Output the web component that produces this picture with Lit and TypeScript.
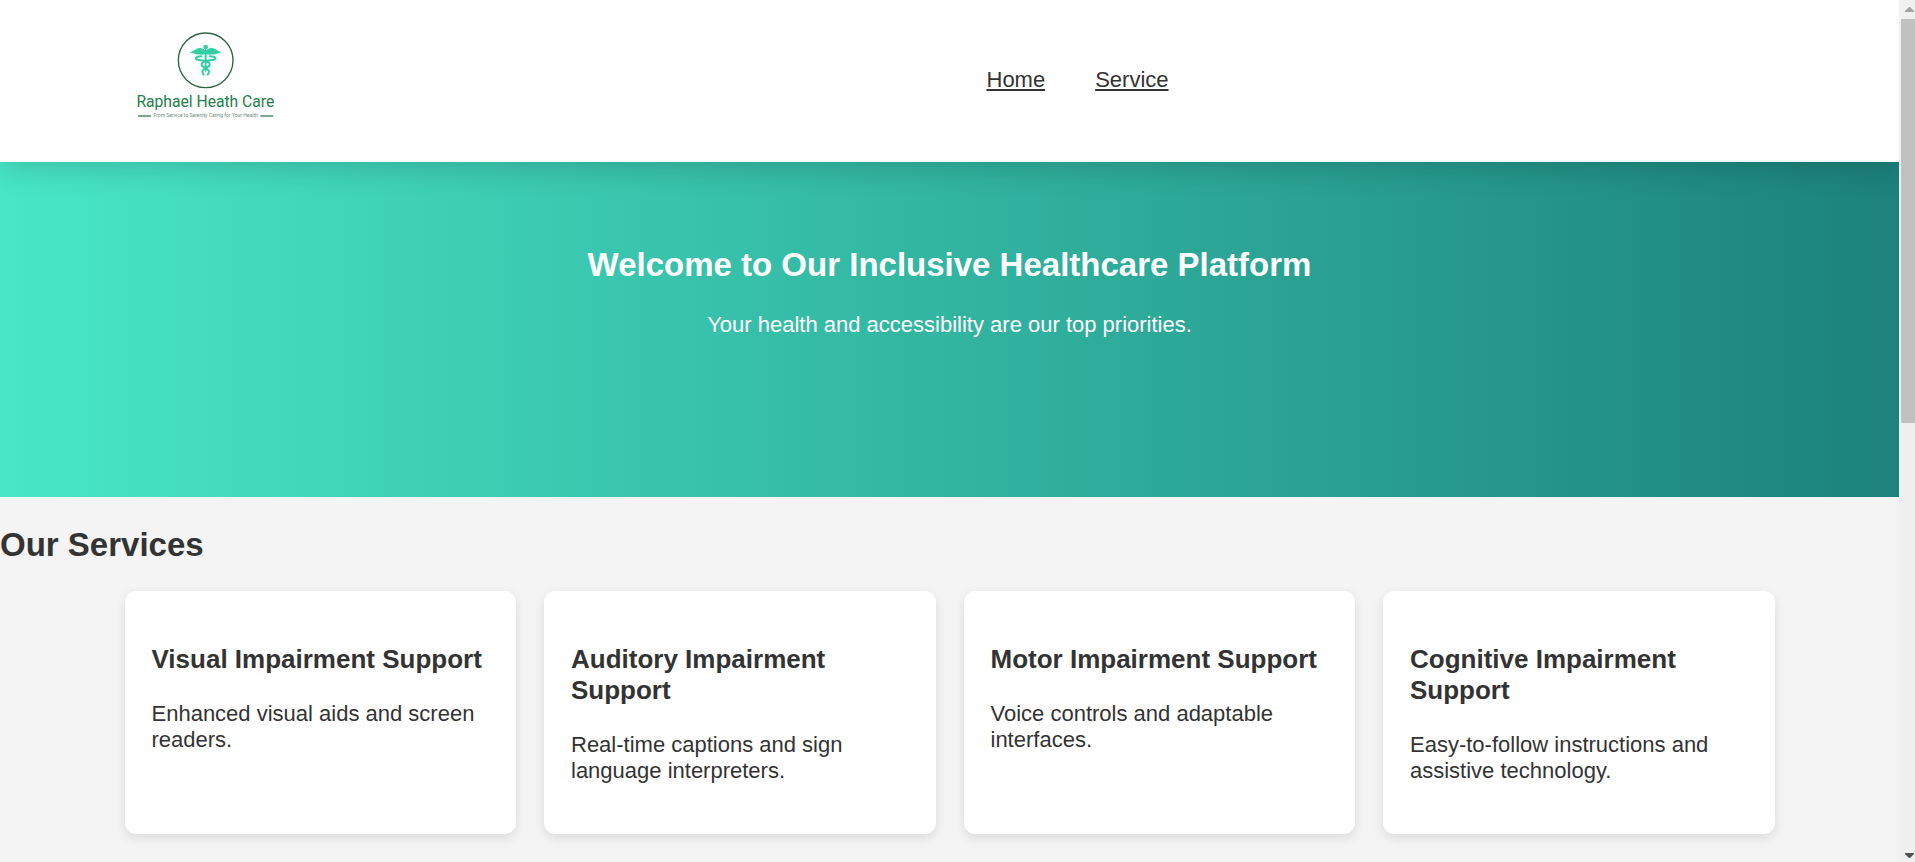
import { LitElement, html, css } from "lit";
import { customElement, property } from "lit/decorators.js";

@customElement("brand-logo")
class BrandLogo extends LitElement {
  static styles = css`
    :host { display: block; }
    .logo { display: block; width: 166px; height: 122px; }
    .name { font-family: Roboto, sans-serif; font-size: 47px; fill: #23804a; }
    .tagline { font-family: Roboto, sans-serif; font-size: 15px; fill: #6f8c7c; }
    .ring { fill: none; stroke: #2c6446; stroke-width: 4; }
    .rule { stroke: #4d8a68; stroke-width: 5; }
    .solid { fill: #32cfa5; }
    .line { fill: none; stroke: #32cfa5; stroke-width: 6; stroke-linecap: round; }
  `;

  render() {
    return html`
      <svg class="logo" viewBox="15 0 498 366" role="img" aria-label="Raphael Heath Care">
        <circle class="ring" cx="257" cy="121" r="82" />
        <circle class="solid" cx="257" cy="81" r="7" />
        <path class="solid" d="M257 92C251 87 245 83 237 84C228 86 220 93 210 97C216 102 222 99 226 103C231 102 234 105 239 103C245 106 250 104 257 102C264 104 269 106 275 103C280 105 283 102 288 103C292 99 298 102 304 97C294 93 286 86 277 84C269 83 263 87 257 92Z" />
        <path class="line" d="M257 90V152" />
        <path class="line" d="M244 109C232 109 227 112 228 116C231 121 244 120 252 122C266 125 272 130 268 137C264 143 248 146 247 154C247 159 249 161 251 164" />
        <path class="line" d="M270 109C282 109 287 112 286 116C283 121 270 120 262 122C248 125 242 130 246 137C250 143 266 146 267 154C267 159 265 161 263 164" />
        <text class="name" x="256" y="261" text-anchor="middle">Raphael Heath Care</text>
        <path class="rule" d="M54 288H93M421 288H460" />
        <text class="tagline" x="257" y="292" text-anchor="middle">From Service to Serenity Caring for Your Health</text>
      </svg>
    `;
  }
}

@customElement("service-card")
class ServiceCard extends LitElement {
  @property() heading = "";
  @property() text = "";

  static styles = css`
    :host {
      display: block;
      box-sizing: border-box;
      padding: 27px;
      background: #fff;
      border-radius: 11px;
      box-shadow: 0 4px 12px rgba(0, 0, 0, 0.1);
    }
    .heading { margin: 26px 0; font-size: 26px; line-height: 31px; }
    .text { margin: 0 0 23px; line-height: 26px; }
  `;

  render() {
    return html`
      <h3 class="heading">${this.heading}</h3>
      <p class="text">${this.text}</p>
    `;
  }
}

@customElement("app-root")
class AppRoot extends LitElement {
  private services = [
    { heading: "Visual Impairment Support", text: "Enhanced visual aids and screen readers." },
    { heading: "Auditory Impairment Support", text: "Real-time captions and sign language interpreters." },
    { heading: "Motor Impairment Support", text: "Voice controls and adaptable interfaces." },
    { heading: "Cognitive Impairment Support", text: "Easy-to-follow instructions and assistive technology." },
  ];

  static styles = css`
    :host {
      display: flex;
      height: 100vh;
      overflow: hidden;
      background: #f4f4f4;
      color: #333;
      font-family: "Liberation Sans", Arial, sans-serif;
      font-size: 22px;
      line-height: 26px;
    }
    .page { flex: 1; min-width: 0; overflow: hidden; }
    .header {
      position: relative;
      z-index: 1;
      background: #fff;
      box-shadow: 0 8px 26px rgba(0, 0, 0, 0.15);
    }
    .bar {
      display: grid;
      grid-template-columns: 1fr 1fr;
      align-items: center;
      max-width: 1650px;
      margin: 0 auto;
      padding: 20px 0;
    }
    .nav { display: flex; gap: 50px; padding: 0 37px 2px; }
    .link { color: #333; }
    .hero {
      box-sizing: border-box;
      min-height: 335px;
      padding: 84px 28px;
      background: linear-gradient(to right, #48e7c7, #1c827b);
      color: #fff;
      text-align: center;
    }
    .title { margin: 0; font-size: 33px; line-height: 38px; }
    .lead { margin: 28px 0 0; }
    .services-title { margin: 29px 0 27px; font-size: 33px; line-height: 38px; }
    .cards {
      display: grid;
      grid-template-columns: repeat(auto-fit, minmax(340px, 1fr));
      gap: 28px;
      max-width: 1650px;
      margin: 0 auto;
    }
    .scrollbar {
      display: flex;
      flex-direction: column;
      width: 16px;
      overflow: hidden;
      background: #f0f0f0;
    }
    .arrow {
      display: block;
      flex: none;
      width: 17px;
      height: 19px;
      padding: 0;
      border: 0;
      background: none;
    }
    .glyph { display: block; width: 17px; height: 19px; }
    .up { fill: #a3a3a3; }
    .down { fill: #505050; }
    .track { flex: 1; padding-left: 2px; }
    .thumb { height: 49%; background: #c1c1c1; }
  `;

  render() {
    return html`
      <div class="page">
        <header class="header">
          <div class="bar">
            <brand-logo></brand-logo>
            <nav class="nav">
              <a class="link" href="#home">Home</a>
              <a class="link" href="#service">Service</a>
            </nav>
          </div>
        </header>
        <main>
          <section class="hero" id="home">
            <h2 class="title">Welcome to Our Inclusive Healthcare Platform</h2>
            <p class="lead">Your health and accessibility are our top priorities.</p>
          </section>
          <section id="service">
            <h2 class="services-title">Our Services</h2>
            <div class="cards">
              ${this.services.map(
                (s) => html`<service-card .heading=${s.heading} .text=${s.text}></service-card>`
              )}
            </div>
          </section>
        </main>
      </div>
      <div class="scrollbar">
        <button class="arrow" aria-label="Scroll up">
          <svg class="glyph" viewBox="0 0 17 19"><path class="up" d="M6 12V11L10 7H11L15 11V12Z" /></svg>
        </button>
        <div class="track"><div class="thumb"></div></div>
        <button class="arrow" aria-label="Scroll down">
          <svg class="glyph" viewBox="0 0 17 19"><path class="down" d="M6 10V11L10 15H11L15 11V10Z" /></svg>
        </button>
      </div>
    `;
  }
}
